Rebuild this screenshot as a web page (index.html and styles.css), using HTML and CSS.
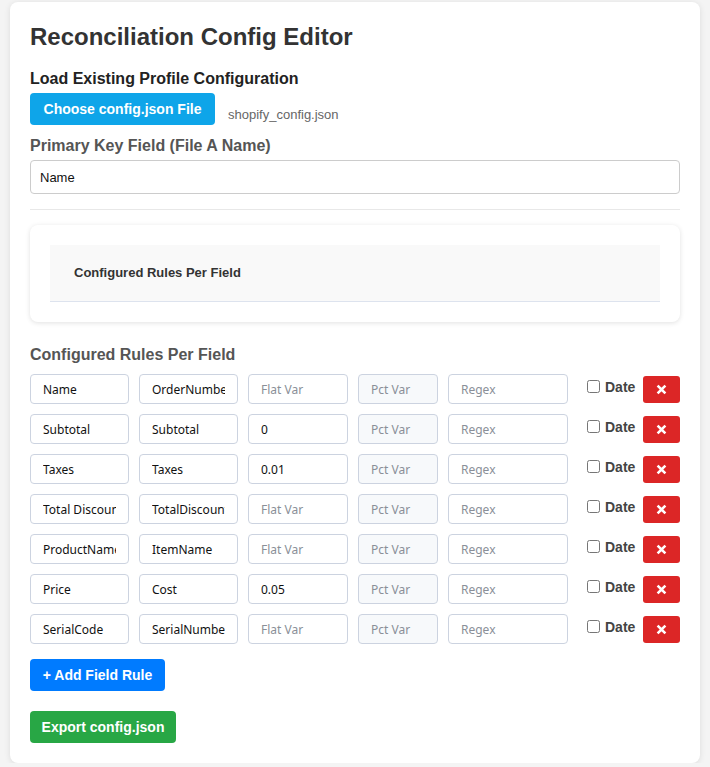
FILE: index.html
```html
<!DOCTYPE html>
<html lang="en">
<head>
    <meta charset="UTF-8">
    <title>Reconciliation Config Editor</title>
    <link rel="stylesheet" href="styles.css">
</head>
<body>

<div class="container">
    <h1>Reconciliation Config Editor</h1>

    <h3 class="loadTitle">Load Existing Profile Configuration</h3>
    <div class="loadRow">
        <button class="btn chooseBtn">Choose config.json File</button>
        <span class="fileName">shopify_config.json</span>
    </div>

    <label class="fieldLabel">Primary Key Field (File A Name)</label>
    <input type="text" class="primaryIpt" value="Name">

    <hr>

    <div class="innerCard">
        <div class="innerHead">Configured Rules Per Field</div>
    </div>

    <h3 class="rulesTitle">Configured Rules Per Field</h3>

    <div class="rules">
        <div class="rule">
            <input type="text" class="ipt w99" value="Name">
            <input type="text" class="ipt w99" value="OrderNumber">
            <input type="text" class="ipt w100" placeholder="Flat Var">
            <input type="text" class="ipt pct" placeholder="Pct Var">
            <input type="text" class="ipt w120" placeholder="Regex">
            <label class="dateChk"><input type="checkbox"> Date</label>
            <button class="delBtn"><svg viewBox="0 0 10 10"><path d="M2 2L8 8M8 2L2 8"/></svg></button>
        </div>
        <div class="rule">
            <input type="text" class="ipt w99" value="Subtotal">
            <input type="text" class="ipt w99" value="Subtotal">
            <input type="text" class="ipt w100" placeholder="Flat Var" value="0">
            <input type="text" class="ipt pct" placeholder="Pct Var">
            <input type="text" class="ipt w120" placeholder="Regex">
            <label class="dateChk"><input type="checkbox"> Date</label>
            <button class="delBtn"><svg viewBox="0 0 10 10"><path d="M2 2L8 8M8 2L2 8"/></svg></button>
        </div>
        <div class="rule">
            <input type="text" class="ipt w99" value="Taxes">
            <input type="text" class="ipt w99" value="Taxes">
            <input type="text" class="ipt w100" placeholder="Flat Var" value="0.01">
            <input type="text" class="ipt pct" placeholder="Pct Var">
            <input type="text" class="ipt w120" placeholder="Regex">
            <label class="dateChk"><input type="checkbox"> Date</label>
            <button class="delBtn"><svg viewBox="0 0 10 10"><path d="M2 2L8 8M8 2L2 8"/></svg></button>
        </div>
        <div class="rule">
            <input type="text" class="ipt w99" value="Total Discounts">
            <input type="text" class="ipt w99" value="TotalDiscount">
            <input type="text" class="ipt w100" placeholder="Flat Var">
            <input type="text" class="ipt pct" placeholder="Pct Var">
            <input type="text" class="ipt w120" placeholder="Regex">
            <label class="dateChk"><input type="checkbox"> Date</label>
            <button class="delBtn"><svg viewBox="0 0 10 10"><path d="M2 2L8 8M8 2L2 8"/></svg></button>
        </div>
        <div class="rule">
            <input type="text" class="ipt w99" value="ProductName">
            <input type="text" class="ipt w99" value="ItemName">
            <input type="text" class="ipt w100" placeholder="Flat Var">
            <input type="text" class="ipt pct" placeholder="Pct Var">
            <input type="text" class="ipt w120" placeholder="Regex">
            <label class="dateChk"><input type="checkbox"> Date</label>
            <button class="delBtn"><svg viewBox="0 0 10 10"><path d="M2 2L8 8M8 2L2 8"/></svg></button>
        </div>
        <div class="rule">
            <input type="text" class="ipt w99" value="Price">
            <input type="text" class="ipt w99" value="Cost">
            <input type="text" class="ipt w100" placeholder="Flat Var" value="0.05">
            <input type="text" class="ipt pct" placeholder="Pct Var">
            <input type="text" class="ipt w120" placeholder="Regex">
            <label class="dateChk"><input type="checkbox"> Date</label>
            <button class="delBtn"><svg viewBox="0 0 10 10"><path d="M2 2L8 8M8 2L2 8"/></svg></button>
        </div>
        <div class="rule">
            <input type="text" class="ipt w99" value="SerialCode">
            <input type="text" class="ipt w99" value="SerialNumber">
            <input type="text" class="ipt w100" placeholder="Flat Var">
            <input type="text" class="ipt pct" placeholder="Pct Var">
            <input type="text" class="ipt w120" placeholder="Regex">
            <label class="dateChk"><input type="checkbox"> Date</label>
            <button class="delBtn"><svg viewBox="0 0 10 10"><path d="M2 2L8 8M8 2L2 8"/></svg></button>
        </div>
    </div>

    <button class="btn addBtn">+ Add Field Rule</button>
    <button class="btn exportBtn">Export config.json</button>
</div>

</body>
</html>
```

FILE: styles.css
```css
* {
    box-sizing: border-box;
    margin: 0;
    padding: 0;
}

body {
    background: #f4f4f4;
    font-family: "Liberation Sans", Arial, sans-serif;
    color: #333;
    padding: 2px 10px 0;
}

.container {
    background: #fff;
    border-radius: 8px;
    box-shadow: 0 1px 6px rgba(0, 0, 0, 0.1);
    padding: 20px 20px 20px;
    width: 690px;
}

h1 {
    font-size: 24px;
    font-weight: bold;
    color: #333;
    line-height: 28px;
    margin-top: 1px;
}

.loadTitle {
    font-size: 16px;
    color: #222;
    margin-top: 19px;
    line-height: 18px;
}

.loadRow {
    display: flex;
    align-items: flex-end;
    margin-top: 5px;
}

.btn {
    border: none;
    border-radius: 4px;
    color: #fff;
    font-family: "Liberation Sans", Arial, sans-serif;
    font-weight: bold;
    font-size: 14px;
    height: 32px;
    padding: 0;
    cursor: pointer;
    display: block;
}

.chooseBtn {
    background: #0ea5e9;
    width: 185px;
}

.fileName {
    font-size: 13px;
    color: #666;
    margin-left: 13px;
    margin-bottom: 3px;
}

.fieldLabel {
    display: block;
    font-size: 16px;
    font-weight: bold;
    color: #555;
    margin-top: 12px;
    line-height: 18px;
}

.primaryIpt {
    display: block;
    width: 100%;
    height: 34px;
    margin-top: 5px;
    border: 1px solid #ccc;
    border-radius: 4px;
    padding: 0 9px;
    font-family: "Liberation Sans", Arial, sans-serif;
    font-size: 13px;
    color: #111;
    outline: none;
}

hr {
    border: none;
    border-top: 1px solid #e8e8e8;
    margin: 15px 0 15px;
}

.innerCard {
    background: #fff;
    border-radius: 8px;
    box-shadow: 0 1px 5px rgba(0, 0, 0, 0.12);
    padding: 20px;
}

.innerHead {
    background: #f9f9f9;
    border-bottom: 1px solid #dde3ee;
    height: 57px;
    line-height: 56px;
    padding-left: 24px;
    font-size: 13px;
    font-weight: bold;
    color: #333;
}

.rulesTitle {
    font-size: 16px;
    color: #555;
    margin-top: 24px;
    line-height: 18px;
}

.rules {
    margin-top: 10px;
}

.rule {
    display: flex;
    align-items: center;
    height: 30px;
    margin-bottom: 10px;
}

.ipt {
    height: 30px;
    border: 1px solid #ccd3e0;
    border-radius: 4px;
    padding: 0 12px;
    margin-right: 10px;
    font-family: "Noto Sans", "Open Sans", sans-serif;
    font-size: 12px;
    color: #111;
    outline: none;
}

.ipt::placeholder {
    color: #8a8f98;
}

.w99 {
    width: 99px;
}

.w100 {
    width: 100px;
}

.pct {
    width: 80px;
    background: #f7f9fb;
}

.w120 {
    width: 120px;
}

.dateChk {
    display: flex;
    align-items: center;
    margin-left: 9px;
    margin-top: -5px;
    font-size: 14px;
    font-weight: bold;
    color: #444;
    width: 56px;
}

.dateChk input {
    width: 13px;
    height: 13px;
    margin-right: 5px;
}

.delBtn {
    width: 37px;
    height: 27px;
    border: none;
    border-radius: 3px;
    background: #dc2626;
    cursor: pointer;
    display: flex;
    align-items: center;
    justify-content: center;
}

.delBtn svg {
    width: 13px;
    height: 13px;
    stroke: #fff;
    stroke-width: 2;
    fill: none;
}

.addBtn {
    background: #007bff;
    margin-top: 15px;
    width: 135px;
}

.exportBtn {
    background: #28a745;
    margin-top: 20px;
    width: 146px;
}
```
